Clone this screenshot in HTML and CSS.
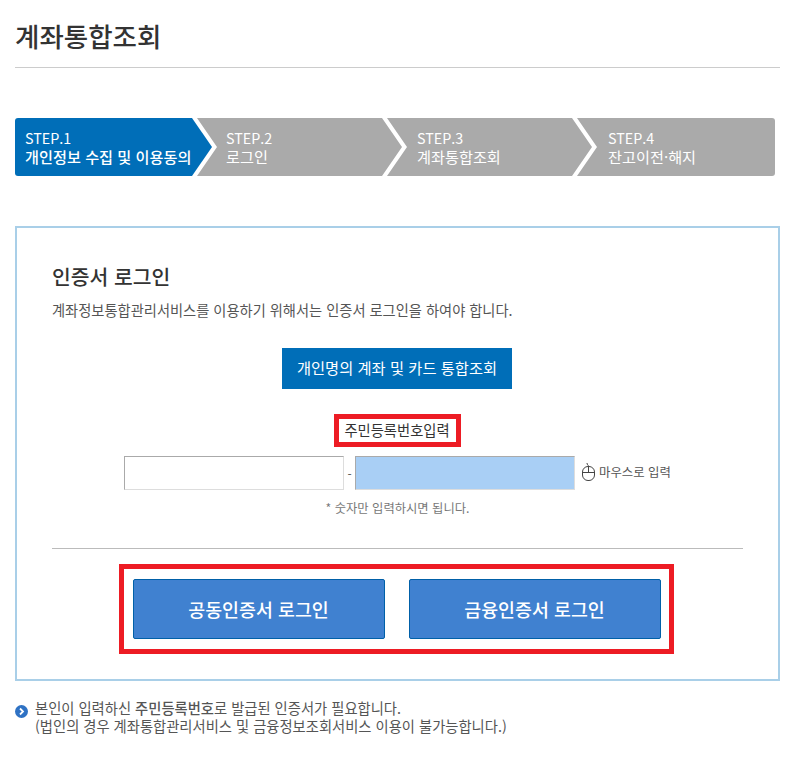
FILE: index.html
```html
<!DOCTYPE html>
<html lang="ko">
<head>
    <meta charset="UTF-8">
    <meta name="viewport" content="width=device-width, initial-scale=1.0">
    <title>계좌통합조회</title>
    <link rel="stylesheet" href="styles.css">
</head>
<body>
    <div class="container">
        <h1 class="page-title">계좌통합조회</h1>

        <ol class="steps">
            <li class="step step-first active"><span>STEP.1</span><strong>개인정보 수집 및 이용동의</strong></li>
            <li class="step"><span>STEP.2</span><span class="step-name">로그인</span></li>
            <li class="step step-third"><span>STEP.3</span><span class="step-name">계좌통합조회</span></li>
            <li class="step step-last"><span>STEP.4</span><span class="step-name">잔고이전·해지</span></li>
        </ol>

        <div class="login-box">
            <h2>인증서 로그인</h2>
            <p class="login-desc">계좌정보통합관리서비스를 이용하기 위해서는 인증서 로그인을 하여야 합니다.</p>

            <div class="center-row">
                <a class="query-btn" href="#">개인명의 계좌 및 카드 통합조회</a>
            </div>

            <div class="center-row">
                <label class="id-label" for="idFront">주민등록번호입력</label>
            </div>

            <div class="id-row">
                <input type="text" id="idFront" class="id-input">
                <span class="id-dash">-</span>
                <input type="text" class="id-input id-input-back">
                <a class="mouse-link" href="#">
                    <svg width="13" height="18" viewBox="0 0 13 18" fill="none" stroke="#444" stroke-width="1">
                        <rect x="0.500" y="3.500" width="12" height="14" rx="5.500"/>
                        <path d="M0.500 9.500h12M6.500 3.500v6M6.500 3.500c0-1.500-1.500-1.500-1.500-3.500"/>
                    </svg>
                    마우스로 입력
                </a>
            </div>

            <p class="id-hint">* 숫자만 입력하시면 됩니다.</p>

            <div class="login-btns">
                <button type="button" class="cert-btn">공동인증서 로그인</button>
                <button type="button" class="cert-btn">금융인증서 로그인</button>
            </div>
        </div>

        <div class="note">
            <svg class="note-icon" width="13" height="13" viewBox="0 0 13 13">
                <circle cx="6.500" cy="6.500" r="6.500" fill="#2f72c4"/>
                <path d="M5 3.500l3 3-3 3" fill="none" stroke="#fff" stroke-width="1.800"/>
            </svg>
            <p>본인이 입력하신 <b>주민등록번호</b>로 발급된 인증서가 필요합니다.<br>(법인의 경우 계좌통합관리서비스 및 금융정보조회서비스 이용이 불가능합니다.)</p>
        </div>
    </div>
</body>
</html>
```

FILE: styles.css
```css
* {
    box-sizing: border-box;
    margin: 0;
    padding: 0;
}

body {
    font-family: "Noto Sans CJK KR", "Noto Sans", sans-serif;
    background: white;
    color: #555;
    font-size: 14.250px;
}

.container {
    width: 765px;
    margin-left: 15px;
}

.page-title {
    height: 68px;
    padding-top: 17px;
    font-size: 26.500px;
    line-height: 38px;
    font-weight: 500;
    color: #333;
    border-bottom: 1px solid #ccc;
}

.steps {
    display: flex;
    width: 760px;
    height: 58px;
    margin-top: 50px;
    list-style: none;
}

.step {
    display: flex;
    flex-direction: column;
    justify-content: center;
    width: 205px;
    margin-left: -15px;
    padding-left: 29px;
    background: #aaa;
    color: white;
    font-size: 14.300px;
    line-height: 18px;
    clip-path: polygon(0 0, calc(100% - 20px) 0, 100% 50%, calc(100% - 20px) 100%, 0 100%, 20px 50%);
}

.step-name,
.step strong {
    font-size: 15.200px;
}

.step strong {
    font-weight: 500;
}

.step.active {
    background: #006eb8;
}

.step-first {
    width: 197px;
    margin-left: 0;
    padding-left: 10px;
    border-radius: 3px 0 0 3px;
    clip-path: polygon(0 0, calc(100% - 20px) 0, 100% 50%, calc(100% - 20px) 100%, 0 100%);
}

.step-third {
    padding-left: 30px;
}

.step-last {
    width: 198px;
    padding-left: 31px;
    border-radius: 0 3px 3px 0;
    clip-path: polygon(0 0, 100% 0, 100% 100%, 0 100%, 20px 50%);
}

.login-box {
    height: 455px;
    margin-top: 50px;
    padding: 0 35px;
    border: 2px solid #a9cfe8;
}

.login-box h2 {
    padding-top: 33px;
    font-size: 20.400px;
    line-height: 30px;
    font-weight: 500;
    color: #333;
}

.login-desc {
    margin-top: 9px;
    line-height: 20px;
}

.center-row {
    display: flex;
    justify-content: center;
    padding-right: 1px;
}

.query-btn {
    display: block;
    width: 230px;
    height: 41px;
    margin-top: 28px;
    background: #006eb8;
    color: white;
    font-size: 15.300px;
    line-height: 39px;
    text-align: center;
    text-decoration: none;
}

.id-label {
    width: 127px;
    height: 33px;
    margin-top: 25px;
    border: 5px solid #ed1c24;
    color: #333;
    font-size: 14.300px;
    line-height: 22px;
    text-align: center;
}

.id-row {
    display: flex;
    align-items: center;
    margin-top: 9px;
    padding-left: 72px;
}

.id-input {
    width: 220px;
    height: 34px;
    border: 1px solid #ddd;
    border-top-color: #aaa;
    border-left-color: #aaa;
    background: white;
}

.id-input-back {
    background: #a9cff5;
}

.id-dash {
    width: 11px;
    font-size: 12px;
    text-align: center;
}

.mouse-link {
    display: flex;
    align-items: center;
    gap: 4px;
    margin-left: 7px;
    padding-bottom: 3px;
    color: #555;
    font-size: 12.400px;
    text-decoration: none;
}

.id-hint {
    margin-top: 9px;
    font-size: 12.300px;
    line-height: 18px;
    color: #777;
    text-align: center;
}

.login-btns {
    display: flex;
    justify-content: center;
    gap: 24px;
    width: 555px;
    height: 90px;
    margin: 47px 0 0 67px;
    padding-top: 10px;
    border: 5px solid #ed1c24;
    position: relative;
}

/* the divider above the red frame */
.login-btns::before {
    content: "";
    position: absolute;
    top: -21px;
    left: -72px;
    width: 691px;
    height: 1px;
    background: #bbb;
}

.cert-btn {
    width: 252px;
    height: 60px;
    border: 1px solid #0060a8;
    border-radius: 2px;
    background: #4081d0;
    color: white;
    font-family: inherit;
    font-size: 18.400px;
    font-weight: 500;
}

.note {
    display: flex;
    gap: 7px;
    margin-top: 18px;
}

.note-icon {
    flex-shrink: 0;
    margin-top: 6px;
}

.note p {
    font-size: 14.300px;
    line-height: 18px;
}

.note b {
    font-weight: 500;
}
```
